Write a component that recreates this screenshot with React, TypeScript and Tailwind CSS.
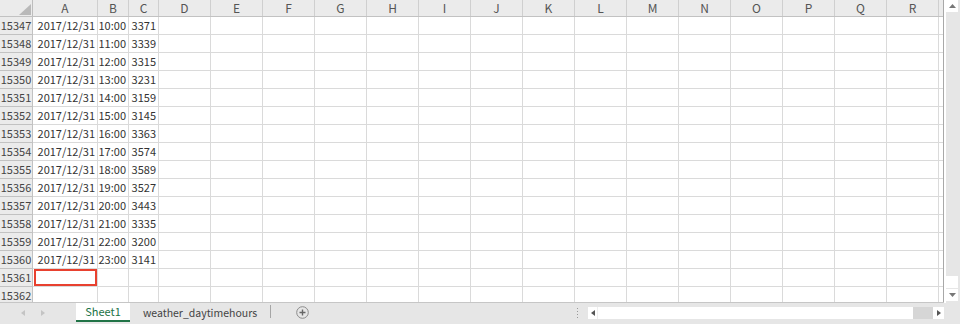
const cols = [
  { k: "A", w: "w-[65px]" },
  { k: "B", w: "w-[31px]" },
  { k: "C", w: "w-[30px]" },
  { k: "D", w: "w-[52px]" },
  { k: "E", w: "w-[52px]" },
  { k: "F", w: "w-[52px]" },
  { k: "G", w: "w-[52px]" },
  { k: "H", w: "w-[52px]" },
  { k: "I", w: "w-[52px]" },
  { k: "J", w: "w-[52px]" },
  { k: "K", w: "w-[52px]" },
  { k: "L", w: "w-[52px]" },
  { k: "M", w: "w-[52px]" },
  { k: "N", w: "w-[52px]" },
  { k: "O", w: "w-[52px]" },
  { k: "P", w: "w-[52px]" },
  { k: "Q", w: "w-[52px]" },
  { k: "R", w: "w-[52px]" },
  { k: "", w: "w-[52px]" },
];

const data: [string, string, string][] = [
  ["2017/12/31", "10:00", "3371"],
  ["2017/12/31", "11:00", "3339"],
  ["2017/12/31", "12:00", "3315"],
  ["2017/12/31", "13:00", "3231"],
  ["2017/12/31", "14:00", "3159"],
  ["2017/12/31", "15:00", "3145"],
  ["2017/12/31", "16:00", "3363"],
  ["2017/12/31", "17:00", "3574"],
  ["2017/12/31", "18:00", "3589"],
  ["2017/12/31", "19:00", "3527"],
  ["2017/12/31", "20:00", "3443"],
  ["2017/12/31", "21:00", "3335"],
  ["2017/12/31", "22:00", "3200"],
  ["2017/12/31", "23:00", "3141"],
  ["", "", ""],
  ["", "", ""],
];

const font = { fontFamily: '"Noto Sans CJK JP", "Noto Sans", sans-serif' };

const Grid = () => {
  return (
    <div className="relative w-[944px] h-[303px] overflow-hidden border-b border-[#c6c6c6] bg-white">
      {/* header row */}
      <div className="flex h-[17px] bg-[#ebebeb] border-b border-[#c2c2c2]">
        <div className="relative w-[33px] shrink-0 border-r border-[#bdbdbd]">
          <svg width="33" height="16" className="absolute left-0 top-0">
            <polygon points="31,4 31,15 19,15" fill="#b9b9b9" />
          </svg>
        </div>
        {cols.map((c, i) => (
          <div
            key={i}
            className={`${c.w} shrink-0 border-r border-[#cfcfcf] text-center text-[12px] leading-[16px] text-[#555]`}
          >
            {c.k}
          </div>
        ))}
      </div>

      {data.map((r, ri) => (
        <div key={ri} className="flex h-[18px]">
          <div className="w-[33px] shrink-0 bg-[#ebebeb] border-r border-b border-[#c2c2c2] text-center text-[11px] leading-[17px] text-[#444]">
            {15347 + ri}
          </div>
          {cols.map((c, ci) => (
            <div
              key={ci}
              className={`relative ${c.w} shrink-0 border-r border-b border-[#dadada] text-right pr-[2px] text-[11px] leading-[17px] text-[#333] whitespace-nowrap`}
            >
              {ci < 3 ? r[ci] : ""}
              {ri === 14 && ci === 0 && (
                <div className="absolute left-[1px] top-0 w-[63px] h-[17px] border-2 border-[#e8412f]" />
              )}
            </div>
          ))}
        </div>
      ))}
      <div className="absolute right-0 top-0 h-full w-[1px] bg-[#a8a8a8]" />
    </div>
  );
};

const VScroll = () => (
  <div className="ml-[2px] w-[14px] h-[303px] bg-[#e6e6e6] flex flex-col">
    <div className="w-[12px] h-[12px] bg-white flex items-center justify-center">
      <svg width="7" height="4"><polygon points="0,4 7,4 3.5,0" fill="#777" /></svg>
    </div>
    <div className="flex-1" />
    <div className="w-[12px] h-[12px] bg-white" />
    <div className="w-[12px] h-[12px] mt-[1px] mb-[2px] bg-white flex items-center justify-center">
      <svg width="7" height="4"><polygon points="0,0 7,0 3.5,4" fill="#777" /></svg>
    </div>
  </div>
);

const TabBar = () => (
  <div className="flex h-[21px] bg-[#e6e6e6] items-start">
    <div className="w-[76px] h-[19px] flex items-center">
      <svg width="6" height="6" className="ml-[20px]"><polygon points="5,0 5,6 1,3" fill="#c4c4c4" /></svg>
      <svg width="6" height="6" className="ml-[14px]"><polygon points="1,0 1,6 5,3" fill="#c4c4c4" /></svg>
    </div>
    <div className="w-[54px] h-[19px] bg-white border-b-2 border-[#217346] flex items-center justify-center text-[11px] text-[#217346]">
      Sheet1
    </div>
    <div className="w-[140px] h-[19px] flex items-center justify-center text-[10.5px] text-[#444]">
      weather_daytimehours
    </div>
    <div className="w-[1px] h-[13px] mt-[2px] bg-[#a6a6a6]" />
    <div className="w-[62px] h-[19px] flex items-center justify-center">
      <svg width="13" height="13" viewBox="0 0 13 13">
        <circle cx="6.5" cy="6.5" r="5.8" fill="none" stroke="#8a8a8a" strokeWidth="1" />
        <path d="M6.5 3.5v6M3.5 6.5h6" stroke="#666" strokeWidth="1.4" />
      </svg>
    </div>
    <div className="w-[243px]" />
    <div className="w-[2px] h-[19px] flex flex-col items-center justify-center gap-[2px]">
      <div className="w-[1px] h-[1px] bg-[#999]" />
      <div className="w-[1px] h-[1px] bg-[#999]" />
      <div className="w-[1px] h-[1px] bg-[#999]" />
      <div className="w-[1px] h-[1px] bg-[#999]" />
    </div>
    <div className="w-[10px]" />
    <div className="flex mt-[4px] h-[12px]">
      <div className="w-[10px] h-[12px] bg-white flex items-center justify-center border-r border-[#eeeeee]">
        <svg width="4" height="6"><polygon points="4,0 4,6 0,3" fill="#555" /></svg>
      </div>
      <div className="w-[315px] h-[12px] bg-white" />
      <div className="w-[20px] h-[12px] bg-[#d6d6d6]" />
      <div className="w-[11px] h-[12px] bg-white flex items-center justify-center">
        <svg width="4" height="6"><polygon points="0,0 0,6 4,3" fill="#555" /></svg>
      </div>
    </div>
  </div>
);

export default function App() {
  return (
    <div className="w-[960px] h-[324px] overflow-hidden bg-white" style={font}>
      <div className="flex">
        <Grid />
        <VScroll />
      </div>
      <TabBar />
    </div>
  );
}
